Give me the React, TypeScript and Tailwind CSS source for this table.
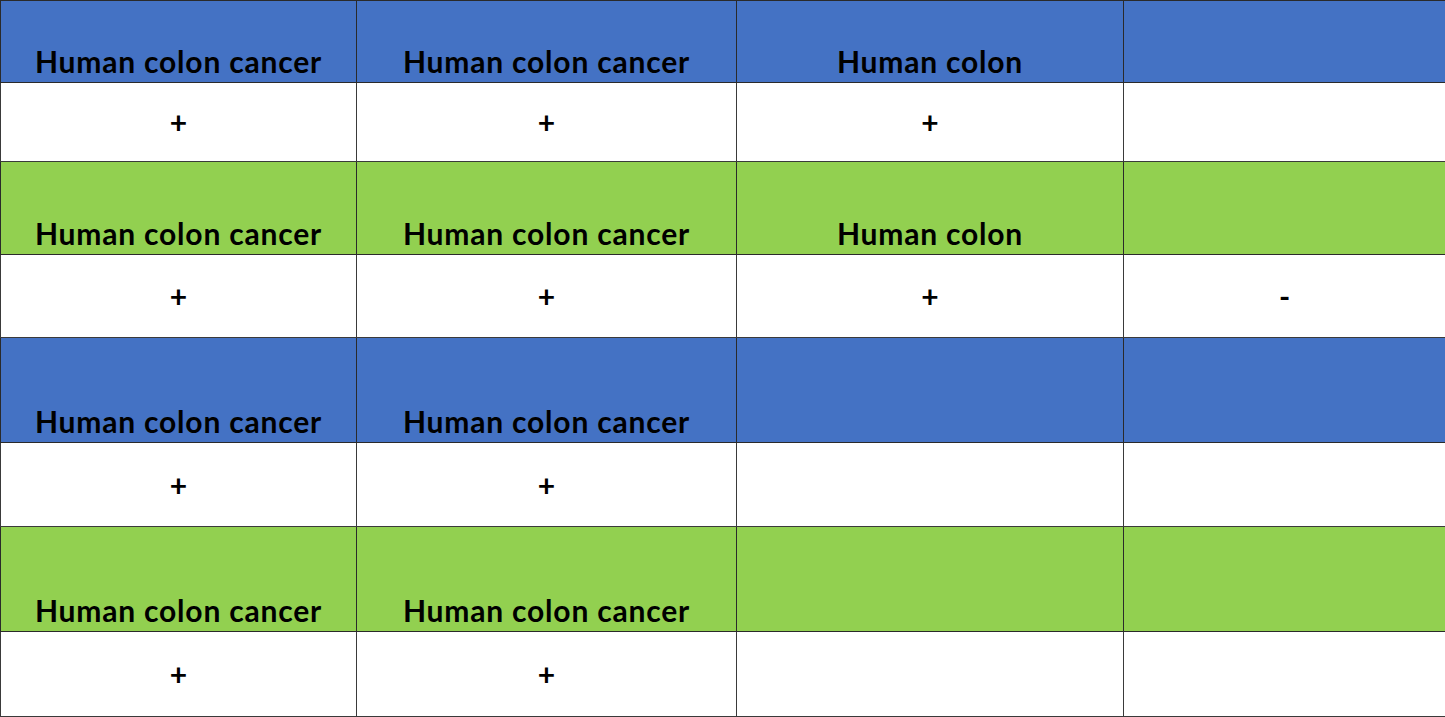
const BLUE = "bg-[#4472c4]";
const GREEN = "bg-[#92d050]";

type Block = {
  color: string;
  headerH: string;
  valueH: string;
  labels: string[];
  values: string[];
};

const blocks: Block[] = [
  {
    color: BLUE,
    headerH: "h-[82px]",
    valueH: "h-[79px]",
    labels: ["Human colon cancer", "Human colon cancer", "Human colon", ""],
    values: ["+", "+", "+", ""],
  },
  {
    color: GREEN,
    headerH: "h-[93px]",
    valueH: "h-[83px]",
    labels: ["Human colon cancer", "Human colon cancer", "Human colon", ""],
    values: ["+", "+", "+", "-"],
  },
  {
    color: BLUE,
    headerH: "h-[105px]",
    valueH: "h-[84px]",
    labels: ["Human colon cancer", "Human colon cancer", "", ""],
    values: ["+", "+", "", ""],
  },
  {
    color: GREEN,
    headerH: "h-[105px]",
    valueH: "h-[85px]",
    labels: ["Human colon cancer", "Human colon cancer", "", ""],
    values: ["+", "+", "", ""],
  },
];

export default function App() {
  return (
    <div className="w-[1445px] h-[717px] bg-white overflow-hidden font-['Lato','Liberation_Sans',sans-serif] font-bold text-black">
      <table className="w-[1445px] table-fixed border-collapse">
        <colgroup>
          <col className="w-[356px]" />
          <col className="w-[380px]" />
          <col className="w-[387px]" />
          <col className="w-[322px]" />
        </colgroup>
        <tbody>
          {blocks.map((b, i) => (
            <>
              <tr key={`h${i}`} className={`${b.color} ${b.headerH}`}>
                {b.labels.map((l, j) => (
                  <td
                    key={j}
                    className="border border-[#2a2a2a] align-bottom text-center text-[30px] tracking-[0.8px] leading-none pb-[6px] p-0 whitespace-nowrap"
                  >
                    {l}
                  </td>
                ))}
              </tr>
              <tr key={`v${i}`} className={`bg-white ${b.valueH}`}>
                {b.values.map((v, j) => (
                  <td
                    key={j}
                    className="border border-[#3a3a3a] align-middle text-center text-[30px] leading-none p-0"
                  >
                    {v}
                  </td>
                ))}
              </tr>
            </>
          ))}
        </tbody>
      </table>
    </div>
  );
}
